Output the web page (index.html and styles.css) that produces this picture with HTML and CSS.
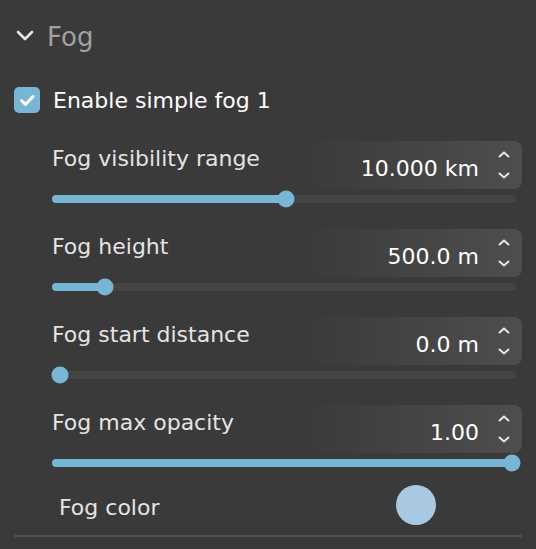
FILE: index.html
```html
<!DOCTYPE html>
<html lang="en">
<head>
    <meta charset="UTF-8">
    <title>Fog settings</title>
    <link rel="stylesheet" href="styles.css">
</head>
<body>
    <div class="panel">
        <div class="section-head">
            <svg class="chevron" width="18" height="12" viewBox="0 0 18 12">
                <polyline points="2,3 9,10 16,3" fill="none" stroke="#e6e6e6" stroke-width="2.6" stroke-linecap="round" stroke-linejoin="round"/>
            </svg>
            <span class="section-title">Fog</span>
        </div>

        <label class="check-row">
            <span class="checkbox">
                <svg width="26" height="26" viewBox="0 0 26 26">
                    <polyline points="7.5,13.5 11.5,17.5 19,9.5" fill="none" stroke="#fff" stroke-width="3" stroke-linecap="round" stroke-linejoin="round"/>
                </svg>
            </span>
            <span class="check-label">Enable simple fog 1</span>
        </label>

        <div class="field">
            <div class="field-top">
                <span class="field-label">Fog visibility range</span>
                <div class="num-box">
                    <span class="num-value">10.000 km</span>
                    <span class="spinner">
                        <svg width="12" height="28" viewBox="0 0 12 28"><polyline points="1,6 6,1.5 11,6" fill="none" stroke="#eee" stroke-width="1.8"/><polyline points="1,22 6,26.5 11,22" fill="none" stroke="#eee" stroke-width="1.8"/></svg>
                    </span>
                </div>
            </div>
            <div class="slider" style="--v: 0.5">
                <div class="slider-fill"></div>
                <div class="slider-thumb"></div>
            </div>
        </div>

        <div class="field">
            <div class="field-top">
                <span class="field-label">Fog height</span>
                <div class="num-box">
                    <span class="num-value">500.0 m</span>
                    <span class="spinner">
                        <svg width="12" height="28" viewBox="0 0 12 28"><polyline points="1,6 6,1.5 11,6" fill="none" stroke="#eee" stroke-width="1.8"/><polyline points="1,22 6,26.5 11,22" fill="none" stroke="#eee" stroke-width="1.8"/></svg>
                    </span>
                </div>
            </div>
            <div class="slider" style="--v: 0.1">
                <div class="slider-fill"></div>
                <div class="slider-thumb"></div>
            </div>
        </div>

        <div class="field">
            <div class="field-top">
                <span class="field-label">Fog start distance</span>
                <div class="num-box">
                    <span class="num-value">0.0 m</span>
                    <span class="spinner">
                        <svg width="12" height="28" viewBox="0 0 12 28"><polyline points="1,6 6,1.5 11,6" fill="none" stroke="#eee" stroke-width="1.8"/><polyline points="1,22 6,26.5 11,22" fill="none" stroke="#eee" stroke-width="1.8"/></svg>
                    </span>
                </div>
            </div>
            <div class="slider" style="--v: 0">
                <div class="slider-fill"></div>
                <div class="slider-thumb"></div>
            </div>
        </div>

        <div class="field">
            <div class="field-top">
                <span class="field-label">Fog max opacity</span>
                <div class="num-box">
                    <span class="num-value">1.00</span>
                    <span class="spinner">
                        <svg width="12" height="28" viewBox="0 0 12 28"><polyline points="1,6 6,1.5 11,6" fill="none" stroke="#eee" stroke-width="1.8"/><polyline points="1,22 6,26.5 11,22" fill="none" stroke="#eee" stroke-width="1.8"/></svg>
                    </span>
                </div>
            </div>
            <div class="slider" style="--v: 1">
                <div class="slider-fill"></div>
                <div class="slider-thumb"></div>
            </div>
        </div>

        <div class="color-row">
            <span class="color-label">Fog color</span>
            <span class="color-swatch"></span>
        </div>

        <div class="divider"></div>
    </div>
</body>
</html>
```

FILE: styles.css
```css
* {
    box-sizing: border-box;
}

body {
    margin: 0;
    background-color: #3a3a3a;
    color: #e8e8e8;
    font-family: "DejaVu Sans", Verdana, sans-serif;
    font-size: 22px;
}

.panel {
    padding: 0 14px;
}

/* header */
.section-head {
    display: flex;
    align-items: center;
    height: 34px;
    margin-top: 18px;
}

.chevron {
    margin-left: 2px;
    margin-right: 13px;
}

.section-title {
    font-size: 26px;
    color: #a0a0a0;
    line-height: 34px;
    margin-top: 3px;
}

/* checkbox */
.check-row {
    display: flex;
    align-items: center;
    height: 26px;
    margin-top: 35px;
    gap: 13px;
}

.checkbox {
    width: 26px;
    height: 26px;
    border-radius: 5px;
    background-color: #78b6d6;
    display: flex;
}

.check-label {
    color: #fff;
    line-height: 26px;
    margin-top: 2px;
}

/* numeric fields */
.field {
    margin-top: 26px;
}

.check-row + .field {
    margin-top: 28px;
}

.field-top {
    display: flex;
    height: 48px;
    padding-left: 38px;
}

.field-label {
    line-height: 30px;
    margin-top: 3px;
    color: #e4e4e4;
}

.num-box {
    margin-left: auto;
    width: 222px;
    border-radius: 8px;
    background: linear-gradient(to right, rgba(255, 255, 255, 0), rgba(255, 255, 255, 0.1));
    display: flex;
    align-items: center;
    justify-content: flex-end;
}

.num-value {
    color: #fff;
    line-height: 30px;
    margin-top: 8px;
}

.spinner {
    display: flex;
    width: 43px;
    justify-content: center;
    padding-left: 6px;
}

/* slider */
.slider {
    position: relative;
    height: 8px;
    margin: 6px 6px 0 38px;
    background-color: #444444;
    border-radius: 4px;
}

.slider-fill {
    height: 100%;
    width: calc(8px + var(--v) * (100% - 12px));
    background-color: #78b6d6;
    border-radius: 4px;
}

.slider-thumb {
    position: absolute;
    top: 50%;
    left: calc(8px + var(--v) * (100% - 12px));
    width: 17px;
    height: 17px;
    border-radius: 50%;
    background-color: #78b6d6;
    transform: translate(-50%, -50%);
}

/* colour */
.color-row {
    display: grid;
    grid-template-columns: 337px 40px;
    align-items: center;
    height: 40px;
    margin-top: 18px;
    padding-left: 45px;
}

.color-label {
    color: #e4e4e4;
    margin-top: 4px;
}

.color-swatch {
    width: 40px;
    height: 40px;
    border-radius: 50%;
    background-color: #a9c9e3;
}

.divider {
    height: 2px;
    margin-top: 10px;
    background-color: #505050;
}
```
